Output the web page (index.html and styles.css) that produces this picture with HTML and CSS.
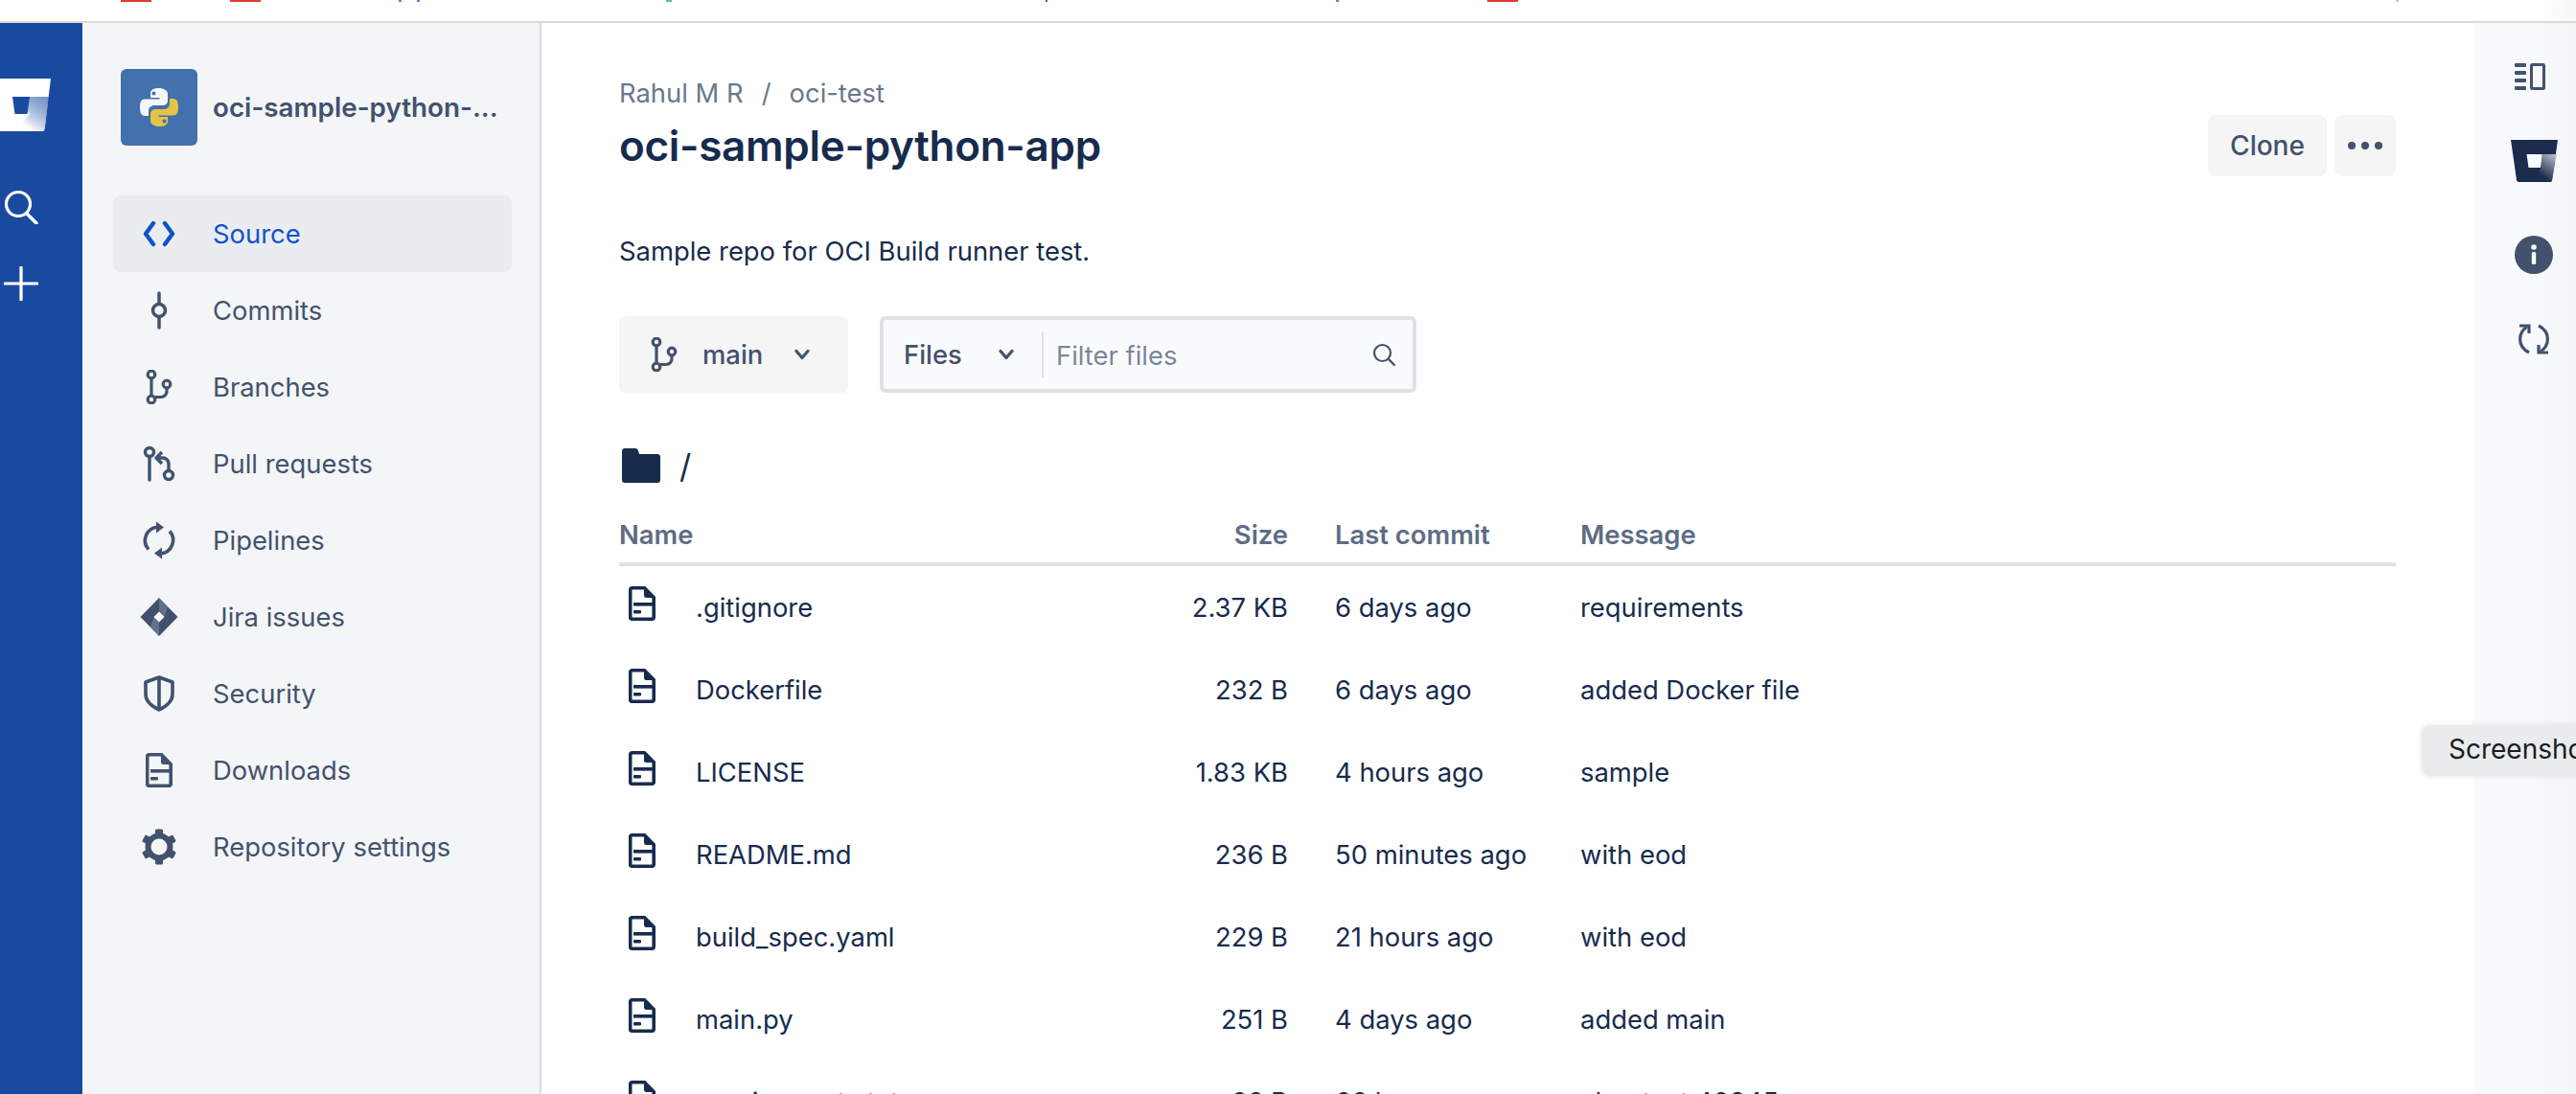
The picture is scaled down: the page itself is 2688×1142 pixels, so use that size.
FILE: index.html
```html
<!DOCTYPE html>
<html lang="en">
<head>
  <meta charset="UTF-8">
  <meta name="viewport" content="width=device-width, initial-scale=1.0">
  <title>oci-sample-python-app</title>
  <link rel="stylesheet" href="styles.css">
</head>
<body>
  <svg class="defs" width="0" height="0" aria-hidden="true">
    <defs>
      <linearGradient id="bucket-white" x1="1" y1="0" x2="0.25" y2="1">
        <stop offset="0" stop-color="#1a4aa0" stop-opacity="0.6"/>
        <stop offset="0.85" stop-color="#fff"/>
      </linearGradient>
      <linearGradient id="bucket-dark" x1="1" y1="0" x2="0.25" y2="1">
        <stop offset="0" stop-color="#c2c5cd"/>
        <stop offset="0.75" stop-color="#1b2c4e"/>
      </linearGradient>
      <symbol id="file" viewBox="0 0 28 36">
        <path d="M3.500 1.800h13l9.700 10v20.700a1.800 1.800 0 0 1-1.800 1.800h-20.900a1.800 1.800 0 0 1-1.800-1.800v-28.900a1.800 1.800 0 0 1 1.800-1.800z" fill="none" stroke="currentColor" stroke-width="3.600"/>
        <path d="M16 1.500l10.500 10.500h-8a2.500 2.500 0 0 1-2.500-2.500z" fill="currentColor"/>
        <rect x="5" y="17" width="20" height="3.600" fill="currentColor"/>
        <rect x="5" y="25" width="8" height="3.600" rx="1" fill="currentColor"/>
      </symbol>
      <symbol id="branch" viewBox="0 0 28 36">
        <g fill="none" stroke="currentColor" stroke-width="3.200">
          <circle cx="6" cy="5" r="3.800"/>
          <circle cx="6" cy="31" r="3.800"/>
          <circle cx="22" cy="15" r="3.800"/>
          <path d="M6 9v18M22 19v3a6 6 0 0 1-6 6.500h-6"/>
        </g>
      </symbol>
      <symbol id="chevron" viewBox="0 0 16 12">
        <path d="M2 2.500l6 7 6-7" fill="none" stroke="currentColor" stroke-width="3.200" stroke-linecap="round" stroke-linejoin="round"/>
      </symbol>
    </defs>
  </svg>

  <div class="browser-edge">
    <span class="tab-mark red mark-a"></span>
    <span class="tab-mark red mark-b"></span>
    <span class="tab-mark blue mark-c"></span>
    <span class="tab-mark blue mark-d"></span>
    <span class="tab-mark green mark-e"></span>
    <span class="tab-mark purple mark-f"></span>
    <span class="tab-mark blue mark-g"></span>
    <span class="tab-mark red mark-h"></span>
    <span class="tab-mark gray mark-i"></span>
  </div>

  <div class="app">
    <nav class="global-nav">
      <svg class="nav-logo" viewBox="0 0 55 55">
        <path d="M-3 0H53L46.500 53a2.500 2.500 0 0 1-2.500 2H-3z" fill="#fff"/>
        <path d="M13 19H51L46.500 53a2.500 2.500 0 0 1-2.500 2H15l16-18z" fill="url(#bucket-white)"/>
        <path d="M13 19H31L28.500 37H15.500z" fill="#1a4aa0"/>
      </svg>
      <svg class="nav-search" viewBox="0 0 36 36">
        <circle cx="15" cy="15" r="12.500" fill="none" stroke="#fff" stroke-width="3.200"/>
        <path d="M24 25l10 10" stroke="#fff" stroke-width="3.600" stroke-linecap="round"/>
      </svg>
      <svg class="nav-plus" viewBox="0 0 36 36">
        <path d="M18 1v34M1 18h34" stroke="#fff" stroke-width="3.200" stroke-linecap="round"/>
      </svg>
    </nav>

    <aside class="sidebar">
      <div class="repo-head">
        <div class="repo-avatar">
          <svg viewBox="0 0 40 40" width="40" height="40">
            <path d="M19.500 0C13 0 11 2.500 11 6v4h9.500v1.500H5C1.500 11.500 0 14.500 0 20s1.500 9 5 9h4v-5c0-3.500 2.500-6 6-6h9c3 0 5-2.200 5-5V6c0-3.500-4-6-9.500-6z" fill="#f4f6f8"/>
            <path d="M20.500 40c6.500 0 8.500-2.500 8.500-6v-4h-9.500v-1.500H35c3.500 0 5-3 5-8.500s-1.500-9-5-9h-4v5c0 3.500-2.500 6-6 6h-9c-3 0-5 2.200-5 5v7c0 3.500 4 6 9.500 6z" fill="#e4c447"/>
            <circle cx="14.500" cy="5.500" r="2" fill="#4271ac"/>
            <circle cx="25.500" cy="34.500" r="2" fill="#4271ac"/>
          </svg>
        </div>
        <div class="repo-name">oci-sample-python-...</div>
      </div>
      <ul class="side-menu">
        <li class="side-item active">
          <svg class="side-icon" viewBox="0 0 40 40"><path d="M14 9L6 20l8 11M26 9l8 11-8 11" fill="none" stroke="currentColor" stroke-width="4.400" stroke-linecap="round" stroke-linejoin="round"/></svg>
          <span>Source</span>
        </li>
        <li class="side-item">
          <svg class="side-icon" viewBox="0 0 40 40"><circle cx="20" cy="20" r="6.500" fill="none" stroke="currentColor" stroke-width="3.500"/><path d="M20 2v11M20 27v11" stroke="currentColor" stroke-width="3.500" stroke-linecap="round"/></svg>
          <span>Commits</span>
        </li>
        <li class="side-item">
          <svg class="side-icon" viewBox="-6 -2 40 40"><use href="#branch" width="28" height="36"/></svg>
          <span>Branches</span>
        </li>
        <li class="side-item">
          <svg class="side-icon" viewBox="0 0 40 40"><g fill="none" stroke="currentColor" stroke-width="3.400"><circle cx="10" cy="8" r="4.500"/><circle cx="30" cy="32" r="4.500"/><path d="M10 12.500V37" stroke-linecap="round"/><path d="M30 27.500V20a6 6 0 0 0-6-6h-6"/><path d="M23 8l-6 6 6 6" stroke-linejoin="round"/></g></svg>
          <span>Pull requests</span>
        </li>
        <li class="side-item">
          <svg class="side-icon" viewBox="0 0 40 40"><g fill="none" stroke="currentColor" stroke-width="3.600"><path d="M9 29.500A14 14 0 0 1 18 6.200"/><path d="M31 10.500A14 14 0 0 1 22 33.800"/></g><path d="M17 .5l8 6-8 6zM23 39.500l-8-6 8-6z" fill="currentColor"/></svg>
          <span>Pipelines</span>
        </li>
        <li class="side-item">
          <svg class="side-icon" viewBox="0 0 40 40">
            <path d="M20 0L39.500 20 20 40 .5 20z" fill="currentColor"/>
            <path d="M20 0L29 9 25.500 20 20 14.500zM20 40L11 31 14.500 20 20 25.500z" fill="#8a96ab" opacity="0.45"/>
            <path d="M20 14.500L25.500 20 20 25.500 14.500 20z" fill="#fff"/>
          </svg>
          <span>Jira issues</span>
        </li>
        <li class="side-item">
          <svg class="side-icon" viewBox="0 0 40 40"><path d="M20 3l14 5v13c0 7-6 12-14 16C12 33 6 28 6 21V8zM20 3v34" fill="none" stroke="currentColor" stroke-width="3.600" stroke-linejoin="round"/></svg>
          <span>Security</span>
        </li>
        <li class="side-item">
          <svg class="side-icon" viewBox="-6 -2 40 40"><use href="#file" width="28" height="36"/></svg>
          <span>Downloads</span>
        </li>
        <li class="side-item">
          <svg class="side-icon" viewBox="0 0 40 40">
            <g fill="currentColor"><rect x="16" y="1.500" width="8" height="37" rx="1.500"/><rect x="16" y="1.500" width="8" height="37" rx="1.500" transform="rotate(60 20 20)"/><rect x="16" y="1.500" width="8" height="37" rx="1.500" transform="rotate(120 20 20)"/></g>
            <circle cx="20" cy="20" r="14.500" fill="currentColor"/>
            <circle cx="20" cy="20" r="8.500" fill="#f4f5f7"/>
          </svg>
          <span>Repository settings</span>
        </li>
      </ul>
    </aside>

    <main class="content">
      <div class="page-head">
        <div class="head-text">
          <div class="crumbs"><span>Rahul M R</span><span class="crumb-sep">/</span><span>oci-test</span></div>
          <h1 class="repo-title">oci-sample-python-app</h1>
        </div>
        <div class="head-actions">
          <button class="btn">Clone</button>
          <button class="btn btn-more"><i></i><i></i><i></i></button>
        </div>
      </div>
      <p class="repo-desc">Sample repo for OCI Build runner test.</p>

      <div class="toolbar">
        <div class="branch-btn">
          <svg class="branch-icon"><use href="#branch"/></svg>
          <span>main</span>
          <svg class="chev"><use href="#chevron"/></svg>
        </div>
        <div class="filter-box">
          <div class="filter-type">
            <span>Files</span>
            <svg class="chev"><use href="#chevron"/></svg>
          </div>
          <div class="filter-input">Filter files</div>
          <svg class="filter-search" viewBox="0 0 24 24">
            <circle cx="10.500" cy="10.500" r="8.500" fill="none" stroke="#42526e" stroke-width="2.200"/>
            <path d="M17 17l6 6" stroke="#42526e" stroke-width="2.400" stroke-linecap="round"/>
          </svg>
        </div>
      </div>

      <div class="path-row">
        <svg class="folder" viewBox="0 0 40 36"><path d="M3 0h11a3 3 0 0 1 3 2.500L18 6h19a3 3 0 0 1 3 3v24a3 3 0 0 1-3 3H3a3 3 0 0 1-3-3V3a3 3 0 0 1 3-3z" fill="#172b4d"/></svg>
        <span>/</span>
      </div>

      <div class="file-table">
        <div class="file-row file-head">
          <div class="col-name">Name</div><div class="col-size">Size</div><div class="col-date">Last commit</div><div class="col-msg">Message</div>
        </div>
        <div class="file-row">
          <div class="col-name"><svg class="file-icon"><use href="#file"/></svg>.gitignore</div><div class="col-size">2.37 KB</div><div class="col-date">6 days ago</div><div class="col-msg">requirements</div>
        </div>
        <div class="file-row">
          <div class="col-name"><svg class="file-icon"><use href="#file"/></svg>Dockerfile</div><div class="col-size">232 B</div><div class="col-date">6 days ago</div><div class="col-msg">added Docker file</div>
        </div>
        <div class="file-row">
          <div class="col-name"><svg class="file-icon"><use href="#file"/></svg>LICENSE</div><div class="col-size">1.83 KB</div><div class="col-date">4 hours ago</div><div class="col-msg">sample</div>
        </div>
        <div class="file-row">
          <div class="col-name"><svg class="file-icon"><use href="#file"/></svg>README.md</div><div class="col-size">236 B</div><div class="col-date">50 minutes ago</div><div class="col-msg">with eod</div>
        </div>
        <div class="file-row">
          <div class="col-name"><svg class="file-icon"><use href="#file"/></svg>build_spec.yaml</div><div class="col-size">229 B</div><div class="col-date">21 hours ago</div><div class="col-msg">with eod</div>
        </div>
        <div class="file-row">
          <div class="col-name"><svg class="file-icon"><use href="#file"/></svg>main.py</div><div class="col-size">251 B</div><div class="col-date">4 days ago</div><div class="col-msg">added main</div>
        </div>
        <div class="file-row">
          <div class="col-name"><svg class="file-icon"><use href="#file"/></svg>requirements.txt</div><div class="col-size">66 B</div><div class="col-date">66 hours ago</div><div class="col-msg">aboutest 40345</div>
        </div>
      </div>
    </main>

    <aside class="right-rail">
      <svg class="rail-panel" viewBox="0 0 32 28">
        <g fill="#42526e"><rect x="0" y="0" width="12" height="4" rx="1"/><rect x="0" y="8" width="12" height="4" rx="1"/><rect x="0" y="16" width="12" height="4" rx="1"/><rect x="0" y="24" width="12" height="4" rx="1"/></g>
        <rect x="17.500" y="1.500" width="13" height="25" rx="1" fill="none" stroke="#42526e" stroke-width="3"/>
      </svg>
      <svg class="rail-logo" viewBox="0 0 49 44">
        <path d="M0 0h49l-6 42a2.500 2.500 0 0 1-2.500 2h-32a2.500 2.500 0 0 1-2.500-2z" fill="#1b2c4e"/>
        <path d="M17 15h30.800L43 42a2.500 2.500 0 0 1-2.500 2H20l12-15z" fill="url(#bucket-dark)"/>
        <path d="M16.500 15h16L31 29H18.500z" fill="#f9fafc"/>
      </svg>
      <svg class="rail-info" viewBox="0 0 40 40">
        <circle cx="20" cy="20" r="20" fill="#42526e"/>
        <circle cx="20" cy="12" r="2.800" fill="#fff"/>
        <rect x="17.800" y="17" width="4.400" height="13" rx="1.500" fill="#fff"/>
      </svg>
      <svg class="rail-sync" viewBox="0 0 32 32">
        <g fill="none" stroke="#42526e" stroke-width="3.200">
          <path d="M9 3C3 7 1.600 11 1.600 16C1.600 22 5 27 11 30"/>
          <path d="M23 29C29 25 30.400 21 30.400 16C30.400 10 27 5 21 2"/>
          <path d="M1 2h10v8M31 30H21v-8"/>
        </g>
      </svg>
    </aside>
  </div>

  <div class="shot-tip">Screenshot</div>
</body>
</html>
```

FILE: styles.css
```css
* { box-sizing: border-box; }
html, body {
  margin: 0;
  padding: 0;
  height: 100%;
}
body {
  background: #fff;
  color: #172b4d;
  font-family: Inter, "Liberation Sans", sans-serif;
  font-size: 27.4px;
  overflow: hidden;
  position: relative;
}
.defs {
  position: absolute;
}

/* sliver of the browser above the page */
.browser-edge {
  height: 24px;
  border-bottom: 2px solid #d9d9d9;
  background: linear-gradient(to right, #fff 98.500%, #f7f7f8 100%);
  position: relative;
}
.tab-mark {
  position: absolute;
  top: 0;
  height: 2px;
}
.red { background: #e03c31; width: 32px; }
.blue { background: #4a86e8; width: 3px; }
.green { background: #4ccb7a; width: 6px; }
.purple { background: #5b4fe0; width: 2px; }
.gray { background: #c4c4c4; width: 3px; }
.mark-a { left: 126px; }
.mark-b { left: 240px; }
.mark-c { left: 416px; }
.mark-d { left: 435px; }
.mark-e { left: 695px; }
.mark-f { left: 1091px; }
.mark-g { left: 1394px; }
.mark-h { left: 1552px; }
.mark-i { left: 2500px; }

.app {
  display: flex;
  height: 1118px;
}

/* left blue strip */
.global-nav {
  width: 86px;
  flex-shrink: 0;
  background: #1a4aa0;
  display: flex;
  flex-direction: column;
  align-items: flex-start;
  padding-top: 58px;
  overflow: hidden;
}
.nav-logo {
  width: 55px;
  height: 55px;
  overflow: hidden;
}
.nav-search {
  width: 36px;
  height: 36px;
  margin: 61px 0 0 4px;
}
.nav-plus {
  width: 36px;
  height: 36px;
  margin: 44px 0 0 4px;
}

/* repo sidebar */
.sidebar {
  width: 479px;
  flex-shrink: 0;
  background: #f4f5f7;
  border-right: 2px solid #d8dade;
  padding: 48px 29px 0 32px;
}
.repo-head {
  display: flex;
  align-items: center;
  gap: 16px;
  padding-left: 8px;
}
.repo-avatar {
  width: 80px;
  height: 80px;
  flex-shrink: 0;
  border-radius: 6px;
  background: #4271ac;
  display: flex;
  align-items: center;
  justify-content: center;
}
.repo-name {
  font-size: 27.8px;
  font-weight: 600;
  color: #42526e;
  white-space: nowrap;
}
.side-menu {
  list-style: none;
  margin: 52px 0 0;
  padding: 0;
}
.side-item {
  height: 80px;
  display: flex;
  align-items: center;
  gap: 36px;
  padding-left: 28px;
  color: #42526e;
  border-radius: 8px;
}
.side-item.active {
  background: #ebecf0;
  color: #0f52cc;
}
.side-icon {
  width: 40px;
  height: 40px;
  flex-shrink: 0;
}

/* main column */
.content {
  flex: 1;
  min-width: 0;
  padding: 54px 80px 0 81px;
  overflow: hidden;
}
.page-head {
  display: flex;
  justify-content: space-between;
  align-items: flex-start;
}
.crumbs {
  color: #6b778c;
  line-height: 38px;
  display: flex;
}
.crumb-sep {
  margin: 0 19px;
}
.repo-title {
  margin: 8px 0 0;
  font-size: 44px;
  line-height: 56px;
  letter-spacing: -0.3px;
  font-weight: 600;
  color: #172b4d;
}
.head-actions {
  display: flex;
  gap: 8px;
  margin-top: 42px;
}
.btn {
  width: 124px;
  height: 64px;
  padding: 0;
  border: none;
  border-radius: 8px;
  background: #f5f5f6;
  color: #42526e;
  font-family: inherit;
  font-size: 28px;
  font-weight: 500;
}
.btn-more {
  width: 64px;
  display: flex;
  align-items: center;
  justify-content: center;
  gap: 6px;
}
.btn-more i {
  width: 8px;
  height: 8px;
  border-radius: 50%;
  background: #42526e;
}
.repo-desc {
  margin: 0;
  padding-top: 58px;
  line-height: 40px;
}
.toolbar {
  display: flex;
  gap: 33px;
  margin-top: 48px;
}
.branch-btn {
  width: 239px;
  height: 80px;
  border-radius: 6px;
  background: #f5f5f6;
  color: #42526e;
  font-weight: 500;
  display: flex;
  align-items: center;
  padding-left: 33px;
}
.branch-icon {
  width: 28px;
  height: 36px;
  margin-right: 26px;
}
.chev {
  width: 16px;
  height: 12px;
  color: #42526e;
}
.branch-btn .chev {
  margin-left: 33px;
}
.filter-box {
  width: 560px;
  height: 80px;
  border: 4px solid #dfe1e6;
  border-radius: 6px;
  background: #fafbfc;
  display: flex;
  align-items: center;
  padding-right: 18px;
}
.filter-type {
  width: 167px;
  height: 48px;
  border-right: 2px solid #dfe1e6;
  display: flex;
  align-items: center;
  padding-left: 21px;
  color: #42526e;
  font-weight: 500;
  flex-shrink: 0;
}
.filter-type .chev {
  margin-left: 38px;
}
.filter-input {
  flex: 1;
  padding: 2px 0 0 13px;
  color: #7a869a;
}
.filter-search {
  width: 24px;
  height: 24px;
}
.path-row {
  display: flex;
  align-items: center;
  gap: 20px;
  margin-top: 58px;
  padding-left: 3px;
  height: 36px;
  font-size: 34px;
  color: #172b4d;
}
.folder {
  width: 40px;
  height: 36px;
}

/* file listing */
.file-table {
  margin-top: 25px;
}
.file-row {
  display: grid;
  grid-template-columns: 560px 138px 305px 1fr;
  height: 86px;
  align-items: center;
}
.file-head {
  height: 62px;
  border-bottom: 4px solid #dfe1e6;
  font-weight: 600;
  color: #5e6c84;
}
.col-size {
  text-align: right;
  white-space: nowrap;
}
.col-date {
  padding-left: 49px;
  white-space: nowrap;
}
.col-name {
  display: flex;
  align-items: center;
}
.file-icon {
  width: 28px;
  height: 36px;
  margin: -9px 42px 0 10px;
  color: #172b4d;
}

/* right rail */
.right-rail {
  width: 108px;
  flex-shrink: 0;
  background: linear-gradient(to right, #f9fafc 55%, #f4f5f7 100%);
  position: relative;
}
.right-rail svg {
  position: absolute;
}
.rail-panel { left: 44px; top: 42px; width: 32px; height: 28px; }
.rail-logo { left: 40px; top: 122px; width: 49px; height: 44px; }
.rail-info { left: 44px; top: 222px; width: 40px; height: 40px; }
.rail-sync { left: 48px; top: 314px; width: 32px; height: 32px; }

/* os screenshot tooltip that hangs over the page */
.shot-tip {
  position: absolute;
  left: 2527px;
  top: 757px;
  width: 200px;
  height: 53px;
  padding-left: 28px;
  line-height: 51px;
  background: #e9ebec;
  border-radius: 8px;
  box-shadow: 0 0 6px rgba(0, 0, 0, 0.1);
  color: #1d1d1f;
  font-size: 28px;
  white-space: nowrap;
}
```
